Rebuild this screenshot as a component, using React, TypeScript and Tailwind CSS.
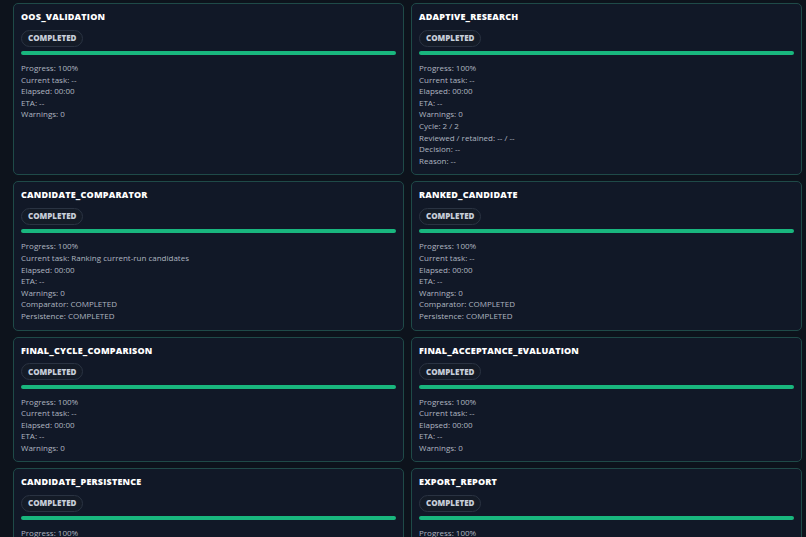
import React from 'react';

const cards: { title: string; lines: string[] }[] = [
  { title: 'OOS_VALIDATION', lines: ['Progress: 100%', 'Current task: --', 'Elapsed: 00:00', 'ETA: --', 'Warnings: 0'] },
  { title: 'ADAPTIVE_RESEARCH', lines: ['Progress: 100%', 'Current task: --', 'Elapsed: 00:00', 'ETA: --', 'Warnings: 0', 'Cycle: 2 / 2', 'Reviewed / retained: -- / --', 'Decision: --', 'Reason: --'] },
  { title: 'CANDIDATE_COMPARATOR', lines: ['Progress: 100%', 'Current task: Ranking current-run candidates', 'Elapsed: 00:00', 'ETA: --', 'Warnings: 0', 'Comparator: COMPLETED', 'Persistence: COMPLETED'] },
  { title: 'RANKED_CANDIDATE', lines: ['Progress: 100%', 'Current task: --', 'Elapsed: 00:00', 'ETA: --', 'Warnings: 0', 'Comparator: COMPLETED', 'Persistence: COMPLETED'] },
  { title: 'FINAL_CYCLE_COMPARISON', lines: ['Progress: 100%', 'Current task: --', 'Elapsed: 00:00', 'ETA: --', 'Warnings: 0'] },
  { title: 'FINAL_ACCEPTANCE_EVALUATION', lines: ['Progress: 100%', 'Current task: --', 'Elapsed: 00:00', 'ETA: --', 'Warnings: 0'] },
  { title: 'CANDIDATE_PERSISTENCE', lines: ['Progress: 100%', 'Current task: --', 'Elapsed: 00:00', 'ETA: --', 'Warnings: 0'] },
  { title: 'EXPORT_REPORT', lines: ['Progress: 100%', 'Current task: --', 'Elapsed: 00:00', 'ETA: --', 'Warnings: 0'] },
];

export default function App() {
  return (
    <div className="h-[537px] overflow-hidden bg-[#0d131c] pl-[13px] pr-[4px] pt-[3px]" style={{ fontFamily: '"Open Sans", "Noto Sans", sans-serif' }}>
      <div className="grid grid-cols-2 gap-x-[7px] gap-y-[6px]">
        {cards.map((c) => (
          <div key={c.title} className="rounded-[5px] border border-[#1f4a48] bg-[#111827] px-[7px] pb-[8px] pt-[7px]">
            <h3 className="text-[9px] font-extrabold leading-[12px] tracking-[0.2px] text-white">{c.title}</h3>
            <div className="mt-[2px] inline-flex h-[17px] items-center rounded-full border border-[#2a3342] bg-[#141b27] px-[6px] text-[8px] font-extrabold text-[#c7ced9]">
              COMPLETED
            </div>
            <div className="mt-[4px] h-[4px] w-full rounded-full bg-[#19b67e]" />
            <div className="mt-[7px] text-[8px] leading-[11.6px] text-[#aeb5c0]">
              {c.lines.map((l) => (
                <div key={l}>{l}</div>
              ))}
            </div>
          </div>
        ))}
      </div>
    </div>
  );
}
